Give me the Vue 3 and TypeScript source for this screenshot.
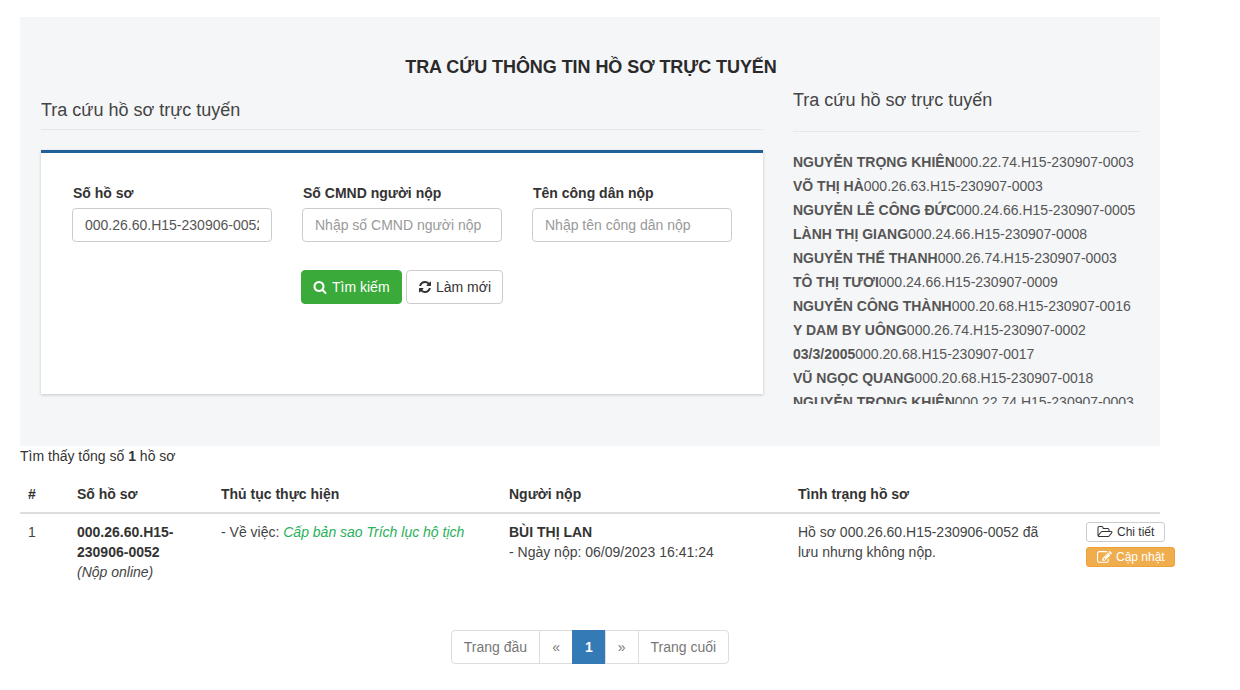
<script setup lang="ts">
const feed: [string, string][] = [
  ['NGUYỄN TRỌNG KHIÊN', '000.22.74.H15-230907-0003'],
  ['VÕ THỊ HÀ', '000.26.63.H15-230907-0003'],
  ['NGUYỄN LÊ CÔNG ĐỨC', '000.24.66.H15-230907-0005'],
  ['LÀNH THỊ GIANG', '000.24.66.H15-230907-0008'],
  ['NGUYỄN THẾ THANH', '000.26.74.H15-230907-0003'],
  ['TÔ THỊ TƯƠI', '000.24.66.H15-230907-0009'],
  ['NGUYỄN CÔNG THÀNH', '000.20.68.H15-230907-0016'],
  ['Y DAM BY UÔNG', '000.26.74.H15-230907-0002'],
  ['03/3/2005', '000.20.68.H15-230907-0017'],
  ['VŨ NGỌC QUANG', '000.20.68.H15-230907-0018'],
  ['NGUYỄN TRỌNG KHIÊN', '000.22.74.H15-230907-0003'],
]
</script>

<template>
  <div class="page">
    <section class="panel">
      <h2 class="title">TRA CỨU THÔNG TIN HỒ SƠ TRỰC TUYẾN</h2>
      <div class="columns">
        <div class="left">
          <h3 class="left-head">Tra cứu hồ sơ trực tuyến</h3>
          <div class="box">
            <div class="fields">
              <label class="field">
                <span class="lbl">Số hồ sơ</span>
                <input class="inp" value="000.26.60.H15-230906-0052" />
              </label>
              <label class="field">
                <span class="lbl">Số CMND người nộp</span>
                <input class="inp" placeholder="Nhập số CMND người nộp" />
              </label>
              <label class="field">
                <span class="lbl">Tên công dân nộp</span>
                <input class="inp" placeholder="Nhập tên công dân nộp" />
              </label>
            </div>
            <div class="actions">
              <button class="btn btn-green">
                <svg class="ico" viewBox="0 0 1792 1792"><path fill="currentColor" d="M1216 832q0-185-131.5-316.5t-316.5-131.5-316.5 131.5-131.5 316.5 131.5 316.5 316.5 131.5 316.5-131.5 131.5-316.5zm512 832q0 52-38 90t-90 38q-54 0-90-38l-343-342q-179 124-399 124-143 0-273.5-55.5t-225-150-150-225-55.5-273.5 55.5-273.5 150-225 225-150 273.5-55.5 273.5 55.5 225 150 150 225 55.5 273.5q0 220-124 399l343 343q37 37 37 90z"/></svg>
                Tìm kiếm
              </button>
              <button class="btn btn-white">
                <svg class="ico" viewBox="0 0 1792 1792"><path fill="currentColor" d="M1639 1056q0 5-1 7-64 268-268 434.5t-478 166.5q-146 0-282.5-55t-243.5-157l-129 129q-19 19-45 19t-45-19-19-45v-448q0-26 19-45t45-19h448q26 0 45 19t19 45-19 45l-137 137q71 66 161 102t187 36q134 0 250-65t186-179q11-17 53-117 8-23 30-23h192q13 0 22.5 9.5t9.5 22.5zm25-800v448q0 26-19 45t-45 19h-448q-26 0-45-19t-19-45 19-45l138-138q-148-137-349-137-134 0-250 65t-186 179q-11 17-53 117-8 23-30 23h-199q-13 0-22.5-9.5t-9.5-22.5v-7q65-268 270-434.5t480-166.5q146 0 284 55.5t245 156.5l130-129q19-19 45-19t45 19 19 45z"/></svg>
                Làm mới
              </button>
            </div>
          </div>
        </div>
        <aside class="right">
          <h3 class="right-head">Tra cứu hồ sơ trực tuyến</h3>
          <div class="feed">
            <div v-for="(f, i) in feed" :key="i" class="feed-row"><b>{{ f[0] }}</b>{{ f[1] }}</div>
          </div>
        </aside>
      </div>
    </section>

    <p class="found">Tìm thấy tổng số <b>1</b> hồ sơ</p>

    <table class="tbl">
      <colgroup>
        <col class="c1" /><col class="c2" /><col class="c3" /><col class="c4" /><col class="c5" /><col class="c6" />
      </colgroup>
      <thead>
        <tr>
          <th>#</th><th>Số hồ sơ</th><th>Thủ tục thực hiện</th><th>Người nộp</th><th>Tình trạng hồ sơ</th><th></th>
        </tr>
      </thead>
      <tbody>
        <tr>
          <td>1</td>
          <td><b>000.26.60.H15-230906-0052</b><br /><i>(Nộp online)</i></td>
          <td>- Về việc: <i class="proc">Cấp bản sao Trích lục hộ tịch</i></td>
          <td><b>BÙI THỊ LAN</b><br />- Ngày nộp: 06/09/2023 16:41:24</td>
          <td class="status">Hồ sơ 000.26.60.H15-230906-0052 đã lưu nhưng không nộp.</td>
          <td class="ops">
            <button class="xs xs-white">
              <svg class="ico-folder" viewBox="0 0 1920 1792"><path fill="currentColor" d="M1781 931q0-35-53-35h-1088q-40 0-85.500 21.500t-71.500 52.500l-294 363q-18 24-18 40 0 35 53 35h1088q40 0 86-22t71-53l294-363q18-22 18-39zm-1141-163h768v-160q0-40-28-68t-68-28h-576q-40 0-68-28t-28-68v-64q0-40-28-68t-68-28h-320q-40 0-68 28t-28 68v853l256-315q44-53 116-87.500t140-34.500zm1269 163q0 62-46 120l-295 363q-43 53-116 87.500t-140 34.500h-1088q-92 0-158-66t-66-158v-960q0-92 66-158t158-66h320q92 0 158 66t66 158v32h544q92 0 158 66t66 158v160h192q54 0 99 24.500t67 70.500q15 32 15 68z"/></svg>
              Chi tiết
            </button>
            <button class="xs xs-orange">
              <svg class="ico-edit" viewBox="0 0 1792 1792"><path fill="currentColor" d="M888 1184l116-116-152-152-116 116v56h96v96h56zm440-720q-16-16-33 1l-350 350q-17 17-1 33t33-1l350-350q17-17 1-33zm80 594v190q0 119-84.500 203.500t-203.500 84.500h-832q-119 0-203.500-84.500t-84.500-203.500v-832q0-119 84.500-203.500t203.500-84.500h832q63 0 117 25 15 7 18 23 3 17-9 29l-49 49q-14 14-32 8-23-6-45-6h-832q-66 0-113 47t-47 113v832q0 66 47 113t113 47h832q66 0 113-47t47-113v-126q0-13 9-22l64-64q15-15 35-7t20 29zm-96-738l288 288-672 672h-288v-288zm444 132l-92 92-288-288 92-92q28-28 68-28t68 28l152 152q28 28 28 68t-28 68z"/></svg>
              Cập nhật
            </button>
          </td>
        </tr>
      </tbody>
    </table>

    <nav class="pager">
      <a class="pg">Trang đầu</a>
      <a class="pg">«</a>
      <a class="pg on">1</a>
      <a class="pg">»</a>
      <a class="pg">Trang cuối</a>
    </nav>
  </div>
</template>

<style>
html, body { margin: 0; background: #fff; }
</style>

<style scoped>
.page {
  width: 1140px;
  margin-left: 20px;
  padding-top: 17px;
  font-family: "Liberation Sans", Arial, sans-serif;
  font-size: 14px;
  line-height: 20px;
  color: #333;
}
.panel {
  height: 429px;
  box-sizing: border-box;
  background: #f5f6f8;
  padding: 40px 21px 0;
}
.title {
  margin: 0 0 10px;
  padding-left: 2px;
  text-align: center;
  font-size: 18px;
  line-height: 20px;
  font-weight: 700;
  letter-spacing: -0.06px;
  color: #2a2a2a;
}
.columns { display: flex; gap: 30px; }
.left { width: 722px; }
.left-head {
  margin: 0 0 20px;
  padding: 13px 0 9px;
  font-size: 18px;
  line-height: 20px;
  font-weight: 400;
  color: #444;
  border-bottom: 1px solid #e7e7e7;
}
.box {
  height: 244px;
  box-sizing: border-box;
  border-top: 3px solid #1f6096;
  background: #fff;
  box-shadow: 0 1px 3px rgba(0, 0, 0, 0.2);
  padding: 30px 31px 0;
}
.fields { display: grid; grid-template-columns: repeat(3, 200px); gap: 30px; }
.field { display: block; }
.lbl { display: block; font-weight: 700; margin: 0 1px 5px; }
.inp {
  display: block;
  width: 100%;
  height: 34px;
  box-sizing: border-box;
  padding: 6px 12px;
  font: inherit;
  color: #555;
  background: #fff;
  border: 1px solid #ccc;
  border-radius: 4px;
  outline: none;
}
.inp::placeholder { color: #999; opacity: 1; }
.actions { display: flex; gap: 4px; margin: 28px 0 0 229px; }
.btn {
  height: 34px;
  box-sizing: border-box;
  padding: 6px 0 6px 11px;
  font: inherit;
  border-radius: 4px;
  display: inline-flex;
  align-items: center;
  border: 1px solid #ccc;
  white-space: nowrap;
}
.btn-green { width: 101px; gap: 5px; background: #3aaa3a; border-color: #3aaa3a; color: #fff; }
.btn-white { width: 97px; gap: 4px; background: #fff; color: #333; }
.ico { width: 14px; height: 14px; flex: none; }
.right { width: 346px; }
.right-head {
  margin: 0;
  padding: 3px 0 21px;
  font-size: 18px;
  line-height: 20px;
  font-weight: 400;
  color: #444;
  border-bottom: 1px solid #e7e7e7;
}
.feed {
  margin-top: 18px;
  height: 254px;
  overflow: hidden;
  color: #555;
}
.feed-row { height: 24px; line-height: 24px; white-space: nowrap; }
.found { margin: 0; height: 20px; }
.tbl {
  margin-top: 10px;
  width: 1140px;
  border-collapse: collapse;
  table-layout: fixed;
}
.c1 { width: 49px; }
.c2 { width: 144px; }
.c3 { width: 288px; }
.c4 { width: 289px; }
.c5 { width: 288px; }
.c6 { width: 82px; }
th {
  text-align: left;
  padding: 8px;
  height: 37px;
  box-sizing: border-box;
  border-bottom: 2px solid #ddd;
  font-weight: 700;
}
td {
  vertical-align: top;
  padding: 8px;
  color: #444;
}
td b { color: #333; }
td.status { padding-right: 30px; }
.proc { color: #28b15a; }
.ops { white-space: nowrap; }
.xs {
  display: flex;
  align-items: center;
  height: 20px;
  box-sizing: border-box;
  padding: 0 10px;
  font: inherit;
  font-size: 12px;
  line-height: 18px;
  border-radius: 3px;
  border: 1px solid #ccc;
}
.xs-white { width: 79px; background: #fff; color: #333; margin-bottom: 5px; gap: 4px; }
.xs-orange { width: 89px; background: #f0ad4e; border-color: #eea236; color: #fff; gap: 4px; }
.ico-folder { width: 16px; height: 14px; flex: none; }
.ico-edit { width: 15px; height: 15px; flex: none; }
.pager { display: flex; justify-content: center; margin-top: 40px; }
.pg {
  height: 34px;
  box-sizing: border-box;
  padding: 6px 12px;
  border: 1px solid #ddd;
  margin-left: -1px;
  color: #777;
  background: #fff;
}
.pg:first-child { margin-left: 0; border-radius: 4px 0 0 4px; }
.pg:last-child { border-radius: 0 4px 4px 0; }
.pg.on { background: #337ab7; border-color: #337ab7; color: #fff; font-weight: 700; }
</style>
